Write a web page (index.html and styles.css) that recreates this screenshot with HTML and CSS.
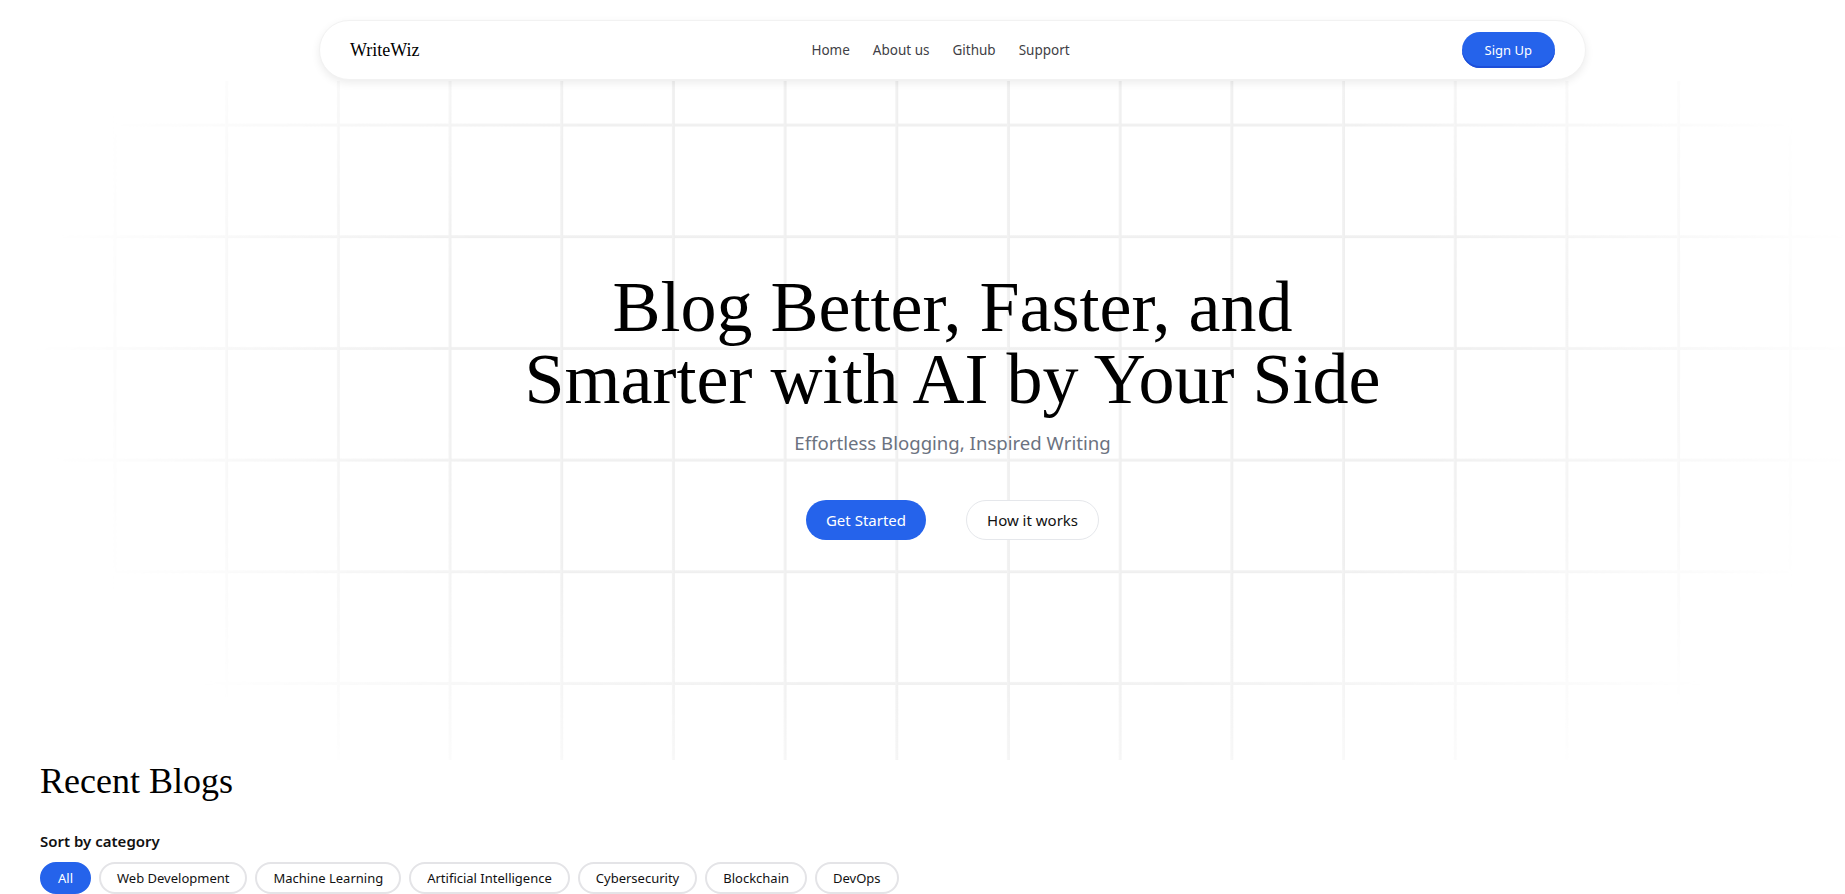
FILE: index.html
```html
<!DOCTYPE html>
<html lang="en">
<head>
<meta charset="utf-8">
<title>WriteWiz</title>
<link rel="stylesheet" href="styles.css">
</head>
<body>
<div class="page">
  <section class="hero">
    <div class="hero-grid" aria-hidden="true"></div>
    <nav class="nav">
      <a class="logo" href="#">WriteWiz</a>
      <ul class="nav-links">
        <li><a href="#">Home</a></li>
        <li><a href="#">About us</a></li>
        <li><a href="#">Github</a></li>
        <li><a href="#">Support</a></li>
      </ul>
      <a class="btn-signup" href="#">Sign Up</a>
    </nav>
    <div class="hero-content">
      <h1 class="hero-title">Blog Better, Faster, and<br>Smarter with AI by Your Side</h1>
      <p class="hero-sub">Effortless Blogging, Inspired Writing</p>
      <div class="hero-actions">
        <a class="btn btn-primary" href="#">Get Started</a>
        <a class="btn btn-outline" href="#">How it works</a>
      </div>
    </div>
  </section>
  <section class="recent">
    <h2 class="recent-title">Recent Blogs</h2>
    <p class="sort-label">Sort by category</p>
    <div class="chips">
      <button class="chip chip-active">All</button>
      <button class="chip">Web Development</button>
      <button class="chip">Machine Learning</button>
      <button class="chip">Artificial Intelligence</button>
      <button class="chip">Cybersecurity</button>
      <button class="chip">Blockchain</button>
      <button class="chip">DevOps</button>
    </div>
  </section>
</div>
</body>
</html>
```
FILE: styles.css
```css
html, body {
  margin: 0;
  padding: 0;
  background: #ffffff;
  overflow-x: hidden;
}
body {
  font-family: "Noto Sans", "Open Sans", sans-serif;
  color: #111111;
}
a { text-decoration: none; color: inherit; }

.page {
  width: 1905px;
}

.hero {
  position: relative;
  height: 760px;
  padding-top: 20px;
  box-sizing: border-box;
}
.hero-grid {
  position: absolute;
  top: 81px;
  left: 0;
  right: 0;
  bottom: 0;
  z-index: 0;
  background-image:
    linear-gradient(to right, transparent 0, #f2f2f2 0.5px, #efefef 2.5px, transparent 3px),
    linear-gradient(to bottom, transparent 0, #f2f2f2 0.5px, #efefef 2.5px, transparent 3px);
  background-size: 111.7px 111.7px;
  background-position: 1.8px 42.5px;
  -webkit-mask-image: radial-gradient(ellipse 920px 580px at 50% 40%, #000 55%, transparent 100%);
  mask-image: radial-gradient(ellipse 920px 580px at 50% 40%, #000 55%, transparent 100%);
}

.nav {
  position: relative;
  z-index: 1;
  width: 1267px;
  height: 60px;
  margin: 0 auto;
  box-sizing: border-box;
  padding: 0 30px;
  display: flex;
  align-items: center;
  justify-content: space-between;
  background: #ffffff;
  border: 1px solid #f2f2f2;
  border-radius: 30px;
  box-shadow: 0 3px 8px rgba(0, 0, 0, 0.08);
}
.logo {
  font-family: "Liberation Serif", "Times New Roman", serif;
  font-size: 18px;
  color: #000000;
}
.nav-links {
  display: flex;
  gap: 23px;
  list-style: none;
  margin: 0;
  padding: 0;
  font-size: 13.5px;
  color: #3f3f46;
}
.btn-signup {
  display: inline-flex;
  align-items: center;
  justify-content: center;
  height: 36px;
  padding: 0 23px;
  box-sizing: border-box;
  border-radius: 18px;
  background: #2563eb;
  color: #ffffff;
  font-size: 13px;
  box-shadow: inset 0 -2px 0 #1d4ed8;
}

.hero-content {
  position: relative;
  z-index: 1;
  display: flex;
  flex-direction: column;
  align-items: center;
  text-align: center;
  padding-top: 191px;
}
.hero-title {
  margin: 0;
  font-family: "Liberation Serif", "Times New Roman", serif;
  font-weight: 400;
  font-size: 72px;
  line-height: 1;
  color: #000000;
}
.hero-sub {
  margin: 14px 0 0;
  font-size: 18.6px;
  line-height: 28px;
  color: #6b7280;
}
.hero-actions {
  display: flex;
  gap: 40px;
  margin-top: 43px;
}
.btn {
  display: inline-flex;
  align-items: center;
  justify-content: center;
  height: 40px;
  padding: 0 20px;
  box-sizing: border-box;
  border-radius: 20px;
  font-size: 15px;
}
.btn-primary {
  background: #2563eb;
  color: #ffffff;
}
.btn-outline {
  background: #ffffff;
  color: #111111;
  border: 1px solid #e5e7eb;
}

.recent {
  padding: 1px 40px 0;
}
.recent-title {
  margin: 0;
  font-family: "Liberation Serif", "Times New Roman", serif;
  font-weight: 400;
  font-size: 36px;
  line-height: 40px;
  color: #000000;
}
.sort-label {
  margin: 30px 0 0;
  font-size: 15px;
  line-height: 20px;
  font-weight: 600;
  color: #111111;
}
.chips {
  display: flex;
  gap: 8px;
  margin-top: 11px;
}
.chip {
  height: 32px;
  padding: 0 16px;
  border: 2px solid #e4e4e7;
  border-radius: 16px;
  background: #ffffff;
  color: #111111;
  font-family: "Noto Sans", "Open Sans", sans-serif;
  font-size: 13px;
  cursor: pointer;
}
.chip-active {
  background: #2563eb;
  border-color: #2563eb;
  color: #ffffff;
}
```
